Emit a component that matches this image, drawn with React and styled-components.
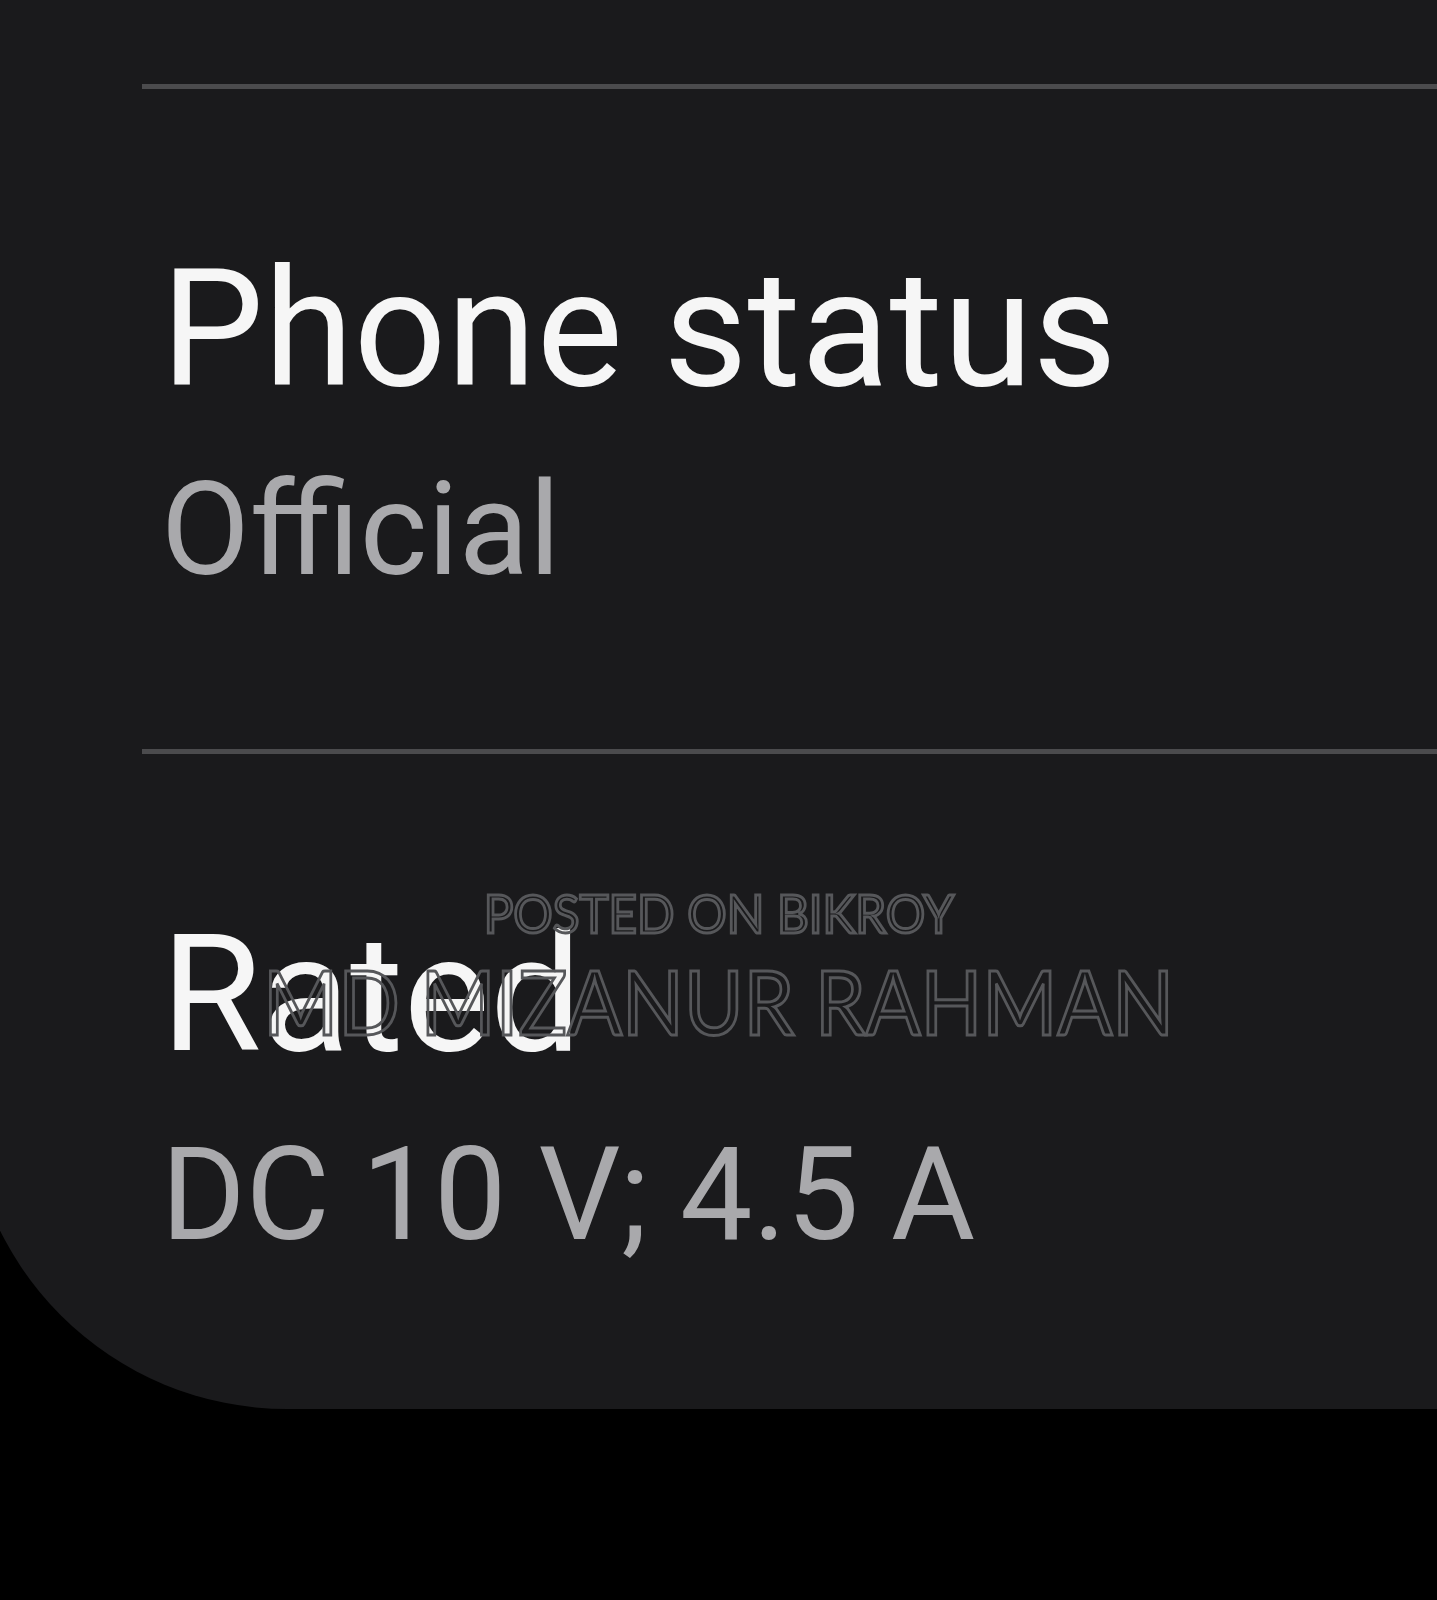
import React from "react";
import styled, { createGlobalStyle } from "styled-components";

const GlobalStyle = createGlobalStyle`
  html, body {
    margin: 0;
    padding: 0;
    background: #000;
    overflow: hidden;
  }
  body {
    font-family: Roboto, "Noto Sans", sans-serif;
  }
`;

const Screen = styled.div`
  position: relative;
  width: 1437px;
  height: 1600px;
  background: #000;
  overflow: hidden;
`;

const Card = styled.div`
  margin-left: -33px;
  width: calc(100% + 100px);
  padding: 84px 0 114px;
  background: #1a1a1c;
  border-bottom-left-radius: 320px;
`;

const Divider = styled.div`
  height: 5px;
  margin-left: 175px;
  background: #4b4b4d;
`;

const Item = styled.div`
  padding: 141px 0 119px 194px;
  &:last-child {
    padding-bottom: 0;
  }
`;

const Title = styled.div`
  font-size: 163px;
  line-height: 200px;
  color: #f6f6f6;
  white-space: nowrap;
`;

const Value = styled.div`
  font-size: 129px;
  line-height: 200px;
  color: #a9a9ac;
  white-space: nowrap;
`;

const Watermark = styled.div`
  position: absolute;
  left: 0;
  right: 0;
  top: 878px;
  display: flex;
  flex-direction: column;
  align-items: center;
  pointer-events: none;
  font-family: Lato, "Open Sans", sans-serif;
  color: transparent;
  -webkit-text-stroke: 3px #56575a;
`;

const MarkLine = styled.div`
  font-size: ${(p) => p.$size}px;
  line-height: ${(p) => p.$lh}px;
  transform: scaleX(${(p) => p.$sx});
  white-space: nowrap;
`;

const rows = [
  { title: "Phone status", value: "Official" },
  { title: "Rated", value: "DC 10 V; 4.5 A" },
];

const App = () => {
  return (
    <Screen>
      <GlobalStyle />
      <Card>
        {rows.map((r) => (
          <React.Fragment key={r.title}>
            <Divider />
            <Item>
              <Title>{r.title}</Title>
              <Value>{r.value}</Value>
            </Item>
          </React.Fragment>
        ))}
      </Card>
      <Watermark>
        <MarkLine $size={53} $lh={70} $sx={0.93}>
          POSTED ON BIKROY
        </MarkLine>
        <MarkLine $size={89} $lh={106} $sx={0.91}>
          MD MIZANUR RAHMAN
        </MarkLine>
      </Watermark>
    </Screen>
  );
};

export default App;
